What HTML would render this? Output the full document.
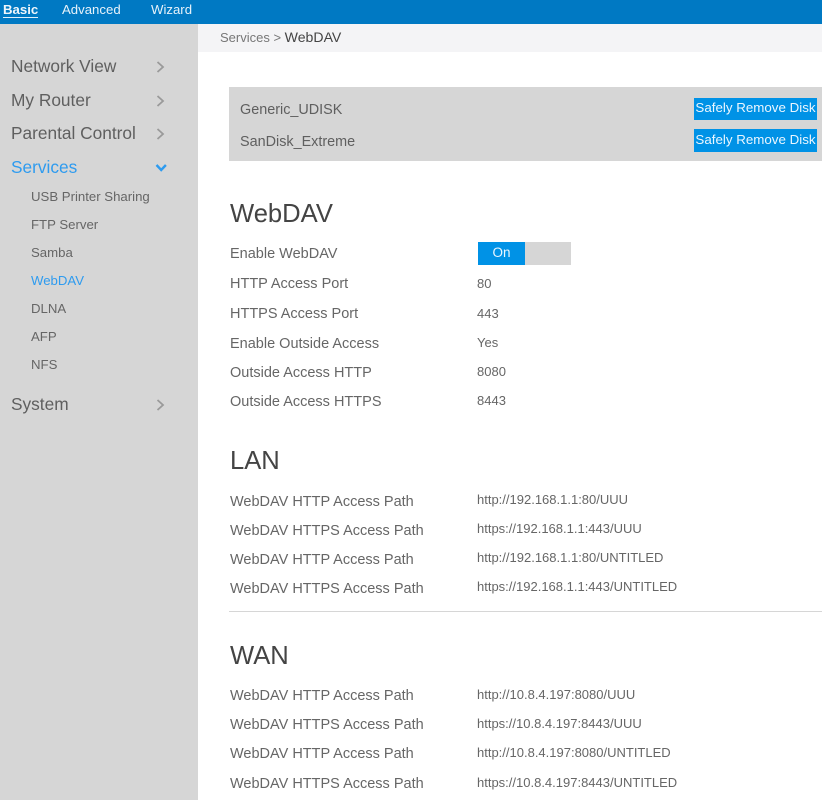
<!DOCTYPE html>
<html><head><meta charset="utf-8"><style>
html,body{margin:0;padding:0;width:822px;height:800px;overflow:hidden;background:#fff;font-family:"Liberation Sans",Arial,sans-serif}
div{position:absolute;white-space:nowrap}
.t{line-height:20px;height:20px}
.n{font-size:17.3px;color:#5f5f5f;left:11px}
.s{font-size:13.2px;color:#666;left:31px}
.l{font-size:14.5px;color:#666;left:230px}
.v{font-size:13px;color:#666;left:477px}
.h{font-size:25.6px;color:#444;left:230px;line-height:30px;height:30px}
.b{background:#0092e6;color:#eaf6ff;font-size:13.35px;left:694px;width:123px;text-align:center}
svg{position:absolute}
</style></head><body>
<div style="left:0;top:0;width:822px;height:24px;background:#0079c3"></div>
<div class="t" style="left:3px;top:0;font-size:13.2px;font-weight:bold;color:#eef6fb">Basic</div>
<div style="left:3px;top:17px;width:35px;height:1px;background:#dfeff9"></div>
<div class="t" style="left:62px;top:0;font-size:13.2px;color:#e6f2fa">Advanced</div>
<div class="t" style="left:151px;top:0;font-size:13.2px;color:#e6f2fa">Wizard</div>
<div style="left:0;top:24px;width:198px;height:776px;background:#d6d6d6"></div>
<div style="left:198px;top:24px;width:624px;height:28px;background:#f4f4f6"></div>
<div class="t" style="left:220px;top:27px;font-size:13px;color:#777">Services &gt; <span style="color:#444;font-size:14.1px">WebDAV</span></div>

<div class="t n" style="top:56px">Network View</div>
<div class="t n" style="top:90px">My Router</div>
<div class="t n" style="top:123px">Parental Control</div>
<div class="t n" style="top:157px;color:#2e9bef">Services</div>
<div class="t s" style="top:187px">USB Printer Sharing</div>
<div class="t s" style="top:215px">FTP Server</div>
<div class="t s" style="top:243px">Samba</div>
<div class="t s" style="top:271px;color:#2e9bef">WebDAV</div>
<div class="t s" style="top:299px">DLNA</div>
<div class="t s" style="top:327px">AFP</div>
<div class="t s" style="top:355px">NFS</div>
<div class="t n" style="top:394px">System</div>
<svg style="left:0;top:0" width="198" height="420" fill="none" stroke-width="1.800">
<path d="M157.500 62l5.500 5-5.500 5M157.500 96l5.500 5-5.500 5M157.500 129l5.500 5-5.500 5M157.500 400l5.500 5-5.500 5" stroke="#9a9a9a"/>
<path d="M156.500 165l4.700 5 4.700-5" stroke="#2e9bef" stroke-width="2.400"/>
</svg>

<div style="left:229px;top:87px;width:593px;height:74px;background:#d6d6d6"></div>
<div class="t" style="left:240px;top:100px;font-size:14.4px;color:#5f5f5f">Generic_UDISK</div>
<div class="t" style="left:240px;top:132px;font-size:14.4px;color:#5f5f5f">SanDisk_Extreme</div>
<div class="b" style="top:98px;height:22px;line-height:20px">Safely Remove Disk</div>
<div class="b" style="top:129px;height:23px;line-height:21px">Safely Remove Disk</div>

<div class="h" style="top:199px">WebDAV</div>
<div class="t l" style="top:244px">Enable WebDAV</div>
<div style="left:478px;top:242px;width:93px;height:23px;background:#d6d6d6"></div>
<div style="left:478px;top:242px;width:47px;height:23px;background:#0092e6;color:#eaf6ff;font-size:13.5px;line-height:21px;text-align:center">On</div>
<div class="t l" style="top:274px">HTTP Access Port</div><div class="t v" style="top:274px">80</div>
<div class="t l" style="top:304px">HTTPS Access Port</div><div class="t v" style="top:304px">443</div>
<div class="t l" style="top:334px">Enable Outside Access</div><div class="t v" style="top:333px">Yes</div>
<div class="t l" style="top:363px">Outside Access HTTP</div><div class="t v" style="top:362px">8080</div>
<div class="t l" style="top:392px">Outside Access HTTPS</div><div class="t v" style="top:391px">8443</div>

<div class="h" style="top:446px">LAN</div>
<div class="t l" style="top:492px">WebDAV HTTP Access Path</div><div class="t v" style="top:490px">http://192.168.1.1:80/UUU</div>
<div class="t l" style="top:521px">WebDAV HTTPS Access Path</div><div class="t v" style="top:519px">https://192.168.1.1:443/UUU</div>
<div class="t l" style="top:550px">WebDAV HTTP Access Path</div><div class="t v" style="top:548px">http://192.168.1.1:80/UNTITLED</div>
<div class="t l" style="top:579px">WebDAV HTTPS Access Path</div><div class="t v" style="top:577px">https://192.168.1.1:443/UNTITLED</div>
<div style="left:229px;top:611px;width:593px;height:1px;background:#d6d6d6"></div>

<div class="h" style="top:641px">WAN</div>
<div class="t l" style="top:686px">WebDAV HTTP Access Path</div><div class="t v" style="top:685px">http://10.8.4.197:8080/UUU</div>
<div class="t l" style="top:715px">WebDAV HTTPS Access Path</div><div class="t v" style="top:714px">https://10.8.4.197:8443/UUU</div>
<div class="t l" style="top:744px">WebDAV HTTP Access Path</div><div class="t v" style="top:743px">http://10.8.4.197:8080/UNTITLED</div>
<div class="t l" style="top:774px">WebDAV HTTPS Access Path</div><div class="t v" style="top:773px">https://10.8.4.197:8443/UNTITLED</div>
</body></html>
